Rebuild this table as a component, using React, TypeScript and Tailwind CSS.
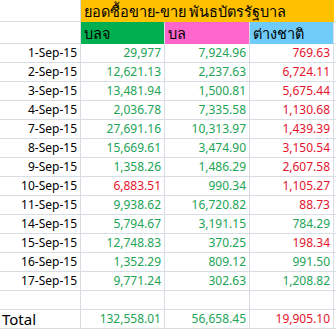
type Tone = "g" | "r";

interface Row {
  date: string;
  cells: [string, Tone][];
}

const rows: Row[] = [
  { date: "1-Sep-15", cells: [["29,977", "g"], ["7,924.96", "g"], ["769.63", "r"]] },
  { date: "2-Sep-15", cells: [["12,621.13", "g"], ["2,237.63", "g"], ["6,724.11", "r"]] },
  { date: "3-Sep-15", cells: [["13,481.94", "g"], ["1,500.81", "g"], ["5,675.44", "r"]] },
  { date: "4-Sep-15", cells: [["2,036.78", "g"], ["7,335.58", "g"], ["1,130.68", "r"]] },
  { date: "7-Sep-15", cells: [["27,691.16", "g"], ["10,313.97", "g"], ["1,439.39", "r"]] },
  { date: "8-Sep-15", cells: [["15,669.61", "g"], ["3,474.90", "g"], ["3,150.54", "r"]] },
  { date: "9-Sep-15", cells: [["1,358.26", "g"], ["1,486.29", "g"], ["2,607.58", "r"]] },
  { date: "10-Sep-15", cells: [["6,883.51", "r"], ["990.34", "g"], ["1,105.27", "r"]] },
  { date: "11-Sep-15", cells: [["9,938.62", "g"], ["16,720.82", "g"], ["88.73", "r"]] },
  { date: "14-Sep-15", cells: [["5,794.67", "g"], ["3,191.15", "g"], ["784.29", "g"]] },
  { date: "15-Sep-15", cells: [["12,748.83", "g"], ["370.25", "g"], ["198.34", "r"]] },
  { date: "16-Sep-15", cells: [["1,352.29", "g"], ["809.12", "g"], ["991.50", "g"]] },
  { date: "17-Sep-15", cells: [["9,771.24", "g"], ["302.63", "g"], ["1,208.82", "g"]] },
];

const totals: [string, Tone][] = [
  ["132,558.01", "g"],
  ["56,658.45", "g"],
  ["19,905.10", "r"],
];

const cell = "border-r border-b border-[#d8dce3] flex items-end overflow-hidden whitespace-nowrap";

function Num({ value, tone }: { value: string; tone: Tone }) {
  return (
    <div
      className={`${cell} justify-end pr-[3px] pb-[1px] text-[12px] leading-[16px] ${
        tone === "g" ? "text-[#22a456]" : "text-[#e4142c]"
      }`}
    >
      {value}
    </div>
  );
}

export default function App() {
  return (
    <div
      className="w-[336px] h-[329px] bg-white overflow-hidden text-black"
      style={{ fontFamily: '"Noto Sans", Tahoma, "DejaVu Sans", sans-serif' }}
    >
      <div className="grid grid-cols-[81px_84px_85px_84px_2px] grid-rows-[22px_22px_repeat(15,19px)]">
        {/* Title row */}
        <div className={cell} />
        <div className="col-span-3 bg-[#ffc000] flex items-end pl-[3px] text-[14.5px] leading-[21px] font-medium">
          ยอดซื้อขาย-ขาย พันธบัตรรัฐบาล
        </div>
        <div className="border-b border-[#d8dce3]" />

        {/* Column headers */}
        <div className={cell} />
        <div className="bg-[#00b050] border-r border-[#d8dce3] flex items-end pl-[3px] text-[14.5px] leading-[21px] font-medium">
          บลจ
        </div>
        <div className="bg-[#ff66cc] border-r border-[#d8dce3] flex items-end pl-[3px] text-[14.5px] leading-[21px] font-medium">
          บล
        </div>
        <div className="bg-[#6fcbf7] border-r border-[#d8dce3] flex items-end pl-[3px] text-[14.5px] leading-[21px] font-medium">
          ต่างชาติ
        </div>
        <div className="border-b border-[#d8dce3]" />

        {rows.map((r) => (
          <div key={r.date} className="contents">
            <div className={`${cell} justify-end pr-[3px] pb-[1px] text-[12px] leading-[16px]`}>
              {r.date}
            </div>
            {r.cells.map(([v, t], i) => (
              <Num key={i} value={v} tone={t} />
            ))}
            <div className="border-b border-[#d8dce3]" />
          </div>
        ))}

        {/* Blank row */}
        <div className={cell} />
        <div className={cell} />
        <div className={cell} />
        <div className={cell} />
        <div className="border-b border-[#d8dce3]" />

        {/* Total */}
        <div className={`${cell} pl-[2px] text-[15px] leading-[17px]`}>Total</div>
        {totals.map(([v, t], i) => (
          <Num key={i} value={v} tone={t} />
        ))}
        <div className="border-b border-[#d8dce3]" />
      </div>
    </div>
  );
}
